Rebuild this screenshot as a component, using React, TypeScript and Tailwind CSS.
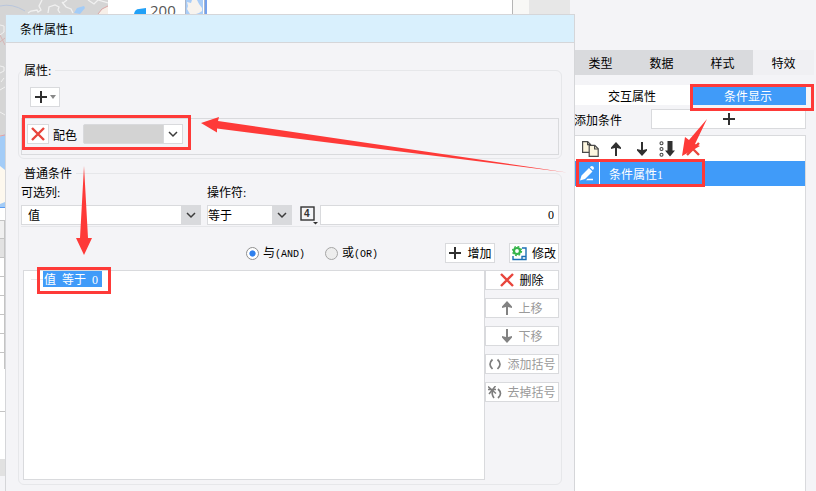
import React from "react";

const font = "font-['Liberation_Serif','Noto_Sans_CJK_SC',serif]";

function Chevron() {
  return (
    <svg width="10" height="10" viewBox="0 0 10 10" fill="none" stroke="#3c3c3c" strokeWidth="1.5">
      <path d="M1 3l4 4 4-4" />
    </svg>
  );
}

function Plus() {
  return (
    <svg width="14" height="14" viewBox="0 0 14 14" fill="none" stroke="#303030" strokeWidth="2">
      <path d="M7 1v12M1 7h12" />
    </svg>
  );
}

function Cross() {
  return (
    <svg width="14" height="14" viewBox="0 0 14 14" fill="none" stroke="#e8453c" strokeWidth="2.4">
      <path d="M1 1l12 12M13 1L1 13" />
    </svg>
  );
}

function Arrow({ down, color }: { down?: boolean; color: string }) {
  return (
    <svg width="12" height="14" viewBox="0 0 12 14" fill={color}>
      {down ? (
        <path d="M5 0h2v8l4-1v1.500L6 14 1 8.500V7l4 1z" />
      ) : (
        <path d="M5 14h2V6l4 1V5.500L6 0 1 5.500V7l4-1z" />
      )}
    </svg>
  );
}

function CopyIcon() {
  return (
    <svg width="17" height="16" viewBox="0 0 17 16" fill="#fdf6df" stroke="#4a4a4a" strokeWidth="1.2">
      <path d="M.6 .6h5l3 3v7.800h-8z" />
      <path d="M5.600 .6v3h3" fill="none" />
      <path d="M7.200 4.400h5.600l3.400 3.400v7.600h-9z" />
      <path d="M12.600 4.400v3.600h3.600" fill="none" />
    </svg>
  );
}

function SortIcon() {
  return (
    <svg width="16" height="16" viewBox="0 0 16 16" fill="none" stroke="#444" strokeWidth="1.1">
      <circle cx="2.500" cy="2.200" r="1.500" />
      <circle cx="2.500" cy="8" r="1.500" />
      <circle cx="2.500" cy="13.800" r="1.500" />
      <path d="M8.500 0h5v9.500H16L11 15.500 6 9.500h2.500z" fill="#303030" stroke="none" />
    </svg>
  );
}

function PencilIcon() {
  return (
    <svg width="15" height="15" viewBox="0 0 15 15" fill="#fff">
      <path d="M0 14.500L1.500 9.500 9 2l3.500 3.500L5 13zM9.800 1.300L11 .2q1.200-.5 2.200.4t.6 2.300l-1 1.200zM7.500 12.800H13v1.400H6z" />
    </svg>
  );
}

function ModifyIcon() {
  return (
    <svg width="15" height="15" viewBox="0 0 15 15" fill="none">
      <path d="M10 2h4v11.500H1V10M10 13.500V10.500h4" stroke="#1b6fb5" strokeWidth="1.400" />
      <circle cx="5" cy="5" r="3" stroke="#35b44a" strokeWidth="2.200" fill="#fff" />
      <circle cx="5" cy="5" r="4.500" stroke="#35b44a" strokeWidth="1.300" strokeDasharray="1.800 1.734" />
    </svg>
  );
}

function Brackets({ removed }: { removed?: boolean }) {
  return (
    <svg width="14" height="13" viewBox="0 0 14 13" fill="none" stroke="#7d7d7d" strokeWidth="1.700">
      <path d={removed ? "M5 4q-2 4 1 8M10 3q5 4.500 0 9" : "M4.500 1.500Q-.5 6 4.500 11M9.500 1.500q5 4.500 0 9.500"} />
      {removed && <path d="M0 .5l8 7M7.500 0L1 8M0 3.500h8" strokeWidth="1.500" />}
    </svg>
  );
}

function FieldIcon() {
  return (
    <svg width="18" height="19" viewBox="0 0 18 19" fill="none" stroke="#333">
      <rect x="1" y="1" width="13" height="13" strokeWidth="1.400" />
      <text x="4" y="11" fill="#333" stroke="none" className="font-['Liberation_Sans',sans-serif] text-[10px] font-bold">4</text>
      <path d="M13 16h5l-2.500 2.500z" fill="#333" stroke="none" />
    </svg>
  );
}

function Tool({ children, className = "", ...rest }: React.ButtonHTMLAttributes<HTMLButtonElement>) {
  return (
    <button
      type="button"
      className={`flex h-5 items-center border border-[#d9dadd] bg-white whitespace-nowrap ${className}`}
      {...rest}
    >
      {children}
    </button>
  );
}

function Text({ children }: { children: React.ReactNode }) {
  return <span className="pt-[2px]">{children}</span>;
}

function Dropdown({ id, value, className, pad }: { id: string; value: string; className: string; pad: string }) {
  return (
    <span className={`relative flex h-5 ${className}`}>
      <select id={id} className={`w-full appearance-none border border-[#d9dadd] bg-white pt-[2px] pr-5 ${pad}`}>
        <option>{value}</option>
      </select>
      <span className="pointer-events-none absolute inset-y-0 right-0 flex w-5 items-center justify-center bg-[#d9dadd]">
        <Chevron />
      </span>
    </span>
  );
}

function MapBackdrop() {
  return (
    <div className="flex h-full flex-col">
      <svg className="h-[207px] w-[108px] bg-[#d5d5d5]" viewBox="0 0 108 207" fill="none">
        <path d="M0 6Q12 3 25 11" stroke="#b9c6dc" />
        <path d="M28 13l3-2 6-1 1 2 3-2-2-4 3-6M48 13l1-6 6-2 4 2-1 3 2 3M62 2l4 5 5 2 2 4M67 0l-4 3M88 0l6 4 4-4 10 3" stroke="#f1f1f1" strokeWidth="1.300" />
        <path d="M74 13l3-5 7-2 1 2-5 6z" fill="#a3ccf7" />
        <path d="M98 14l4-5 6-3v8z" fill="#f7efe8" />
        <path d="M98 14l4-5 6-3" stroke="#d9a6a6" />
        <path d="M0 25l4 1v6l-4 3M0 66l4 1v4l-4 2M4 78l-3 4M0 90l5-3M0 112l5 3" stroke="#f1f1f1" />
        <path d="M0 35l5 10M0 42l5-4" stroke="#d6b4b4" />
        <path d="M0 137l5-3v73H0z" fill="#a3ccf7" />
        <path d="M0 136l5-1" stroke="#e6a0a0" />
        <path d="M0 166l5 4v32l-5 2z" fill="#fdf8ee" />
      </svg>
      <div className="h-[13px] w-[5px] border-t border-[#5b9bf0] bg-white" />
      <div className="h-[18px] w-[5px] border-t border-r border-[#c4c4c4] bg-[#f0f0f0]" />
      <div className="h-[19px] w-[5px] border-t border-r border-[#c4c4c4] bg-[#e2e2e2]" />
      <div className="h-[19px] w-[5px] border-t border-r border-[#c4c4c4] bg-white" />
      <div className="h-[19px] w-[5px] border-t border-r border-[#c4c4c4] bg-white" />
      <div className="h-[19px] w-[5px] border-t border-r border-[#c4c4c4] bg-white" />
      <div className="h-[19px] w-[5px] border-t border-r border-[#c4c4c4] bg-white" />
      <div className="h-[19px] w-[5px] border-t border-r border-[#c4c4c4] bg-white" />
      <div className="h-[17px] w-[5px] border-t border-r border-[#c4c4c4] bg-white" />
      <div className="h-[42px] w-[5px] bg-white" />
      <div className="h-[48px] w-[5px] border-t border-[#c4c4c4] bg-white" />
      <div className="h-[17px] w-[5px] bg-[#e1e1e1]" />
    </div>
  );
}

function ChartBackdrop() {
  return (
    <div className="flex flex-1 items-start border-r border-[#b5b5b5] bg-white">
      <svg className="mt-2 ml-[26px] h-[6px] w-[12px]" viewBox="0 0 12 6" fill="#22a1f7">
        <path d="M0 6Q1 1 5 1l7-1v6z" />
      </svg>
      <span className="ml-1 font-['Open_Sans',sans-serif] text-[15px] leading-5 text-[#555]">200</span>
      <svg className="ml-[9px] h-[14px] w-[22px]" viewBox="0 0 22 14">
        <path d="M0 0h18v14H0z" fill="#a9cdf8" />
        <path d="M2 2l4 1 1-3h5l2 4 3 4v3l-3 2-3 1H5L2 9l1-3z" fill="#f7f3ee" />
        <path d="M.5 0v14M19.500 0v14" stroke="#aab5c8" fill="none" />
        <path d="M21 0v14" stroke="#4682e8" strokeWidth="1.500" />
      </svg>
    </div>
  );
}

function ConditionDialog() {
  return (
    <section className="absolute top-[14px] right-[241px] bottom-0 left-[5px] border-t border-r border-l border-[#d5d6d9] bg-[#f4f4f7]">
      <h1 className="h-7 border-b border-[#d5d6d9] bg-[#d9f0fd] pl-[14px] leading-[30px]">条件属性1</h1>

      <div className="flex flex-col gap-[3px] px-3 pt-4">
        <fieldset className="rounded-md border border-[#e6e7ea] px-[2px] pb-[3px]">
          <legend className="pt-[2px] pr-1 pl-[3px] leading-5">属性:</legend>
          <div className="flex flex-col gap-[11px] pt-[6px]">
            <Tool className="ml-[9px] w-[30px] justify-center gap-[2px]" aria-label="属性">
              <Plus />
              <svg width="6" height="4" viewBox="0 0 6 4" fill="#888">
                <path d="M0 0h6L3 4z" />
              </svg>
            </Tool>
            <div className="flex h-[37px] items-start border border-[#d9dadd] pt-[5px] pl-[5px]">
              <Tool className="w-[22px] justify-center" aria-label="删除">
                <Cross />
              </Tool>
              <label htmlFor="palette" className="ml-1 pt-[2px] leading-5">配色</label>
              <span className="relative ml-[6px] flex h-5 w-[100px]">
                <select id="palette" className="w-full appearance-none rounded-[2px] border border-[#d9dadd] bg-[#d3d3d3]">
                  <option></option>
                </select>
                <span className="pointer-events-none absolute inset-y-0 right-0 flex w-5 items-center justify-center border border-[#d9dadd] bg-white">
                  <Chevron />
                </span>
              </span>
            </div>
          </div>
        </fieldset>

        <fieldset className="rounded-md border border-[#e6e7ea] px-[2px] pb-1">
          <legend className="pt-[2px] pr-1 pl-[3px] leading-5">普通条件</legend>
          <div className="flex border-b border-[#e6e7ea] pb-[1px]">
            <div className="w-[180px]">
              <label htmlFor="column" className="block h-[21px] leading-[18px]">可选列:</label>
              <Dropdown id="column" value="值" className="w-full" pad="pl-[6px]" />
            </div>
            <div className="ml-[6px] w-[85px]">
              <label htmlFor="operator" className="block h-[21px] leading-[18px]">操作符:</label>
              <Dropdown id="operator" value="等于" className="w-full" pad="pl-0" />
            </div>
            <div className="mt-[21px] ml-[7px] flex flex-1 gap-px">
              <button type="button" aria-label="值" className="flex h-5 w-5 items-center justify-center">
                <FieldIcon />
              </button>
              <input
                aria-label="值"
                defaultValue="0"
                className="h-5 min-w-0 flex-1 border border-[#d9dadd] bg-white px-1 text-right"
              />
            </div>
          </div>

          <div className="mt-4 flex h-5 items-center justify-end">
            <label className="flex items-center gap-1">
              <input
                type="radio"
                name="join"
                defaultChecked
                className="h-[13px] w-[13px] appearance-none rounded-full border border-[#8f8f8f] bg-white bg-radial from-[#2f80ed] from-35% to-white to-45%"
              />
              <Text>
                与<span className="font-['Liberation_Mono',monospace] text-[10px]">(AND)</span>
              </Text>
            </label>
            <label className="ml-5 flex items-center gap-1">
              <input
                type="radio"
                name="join"
                className="h-[13px] w-[13px] appearance-none rounded-full border border-[#a5a5a5] bg-[#ededed]"
              />
              <Text>
                或<span className="font-['Liberation_Mono',monospace] text-[10px]">(OR)</span>
              </Text>
            </label>
            <Tool className="ml-[67px] w-[50px] justify-center gap-[5px]">
              <Plus />
              <Text>增加</Text>
            </Tool>
            <Tool className="ml-[14px] w-[50px] justify-center gap-[5px]">
              <ModifyIcon />
              <Text>修改</Text>
            </Tool>
          </div>

          <div className="mt-[7px] flex">
            <ul className="ml-[2px] h-[210px] flex-1 border border-[#d9dadd] bg-white">
              <li className="flex items-center">
                <span className="ml-[7px] h-px w-[12px] bg-[#e6e7ea]" />
                <span className="flex h-4 items-center gap-[6px] bg-[#409bf9] pr-1 pl-px text-white">
                  <Text>值</Text>
                  <Text>等于</Text>
                  <Text>0</Text>
                </span>
              </li>
            </ul>
            <div className="flex w-[74px] flex-col gap-2">
              <Tool className="w-full justify-center gap-[5px]">
                <Cross />
                <Text>删除</Text>
              </Tool>
              <Tool disabled className="w-full justify-center gap-[5px] text-[#9a9a9a]">
                <Arrow color="#828282" />
                <Text>上移</Text>
              </Tool>
              <Tool disabled className="w-full justify-center gap-[5px] text-[#9a9a9a]">
                <Arrow down color="#828282" />
                <Text>下移</Text>
              </Tool>
              <Tool disabled className="w-full justify-center gap-[5px] text-[#9a9a9a]">
                <Brackets />
                <Text>添加括号</Text>
              </Tool>
              <Tool disabled className="w-full justify-center gap-[5px] text-[#9a9a9a]">
                <Brackets removed />
                <Text>去掉括号</Text>
              </Tool>
            </div>
          </div>
        </fieldset>
      </div>
    </section>
  );
}

function SidePanel() {
  return (
    <aside className="flex w-[246px] flex-col bg-[#f4f4f7] pt-[50px]">
      <nav className="flex h-[25px] pr-[2px]">
        <button type="button" className="flex-1 bg-[#d9dadd] pt-[2px]">类型</button>
        <button type="button" className="flex-1 bg-[#d9dadd] pt-[2px]">数据</button>
        <button type="button" className="flex-1 bg-[#d9dadd] pt-[2px]">样式</button>
        <button type="button" className="flex-1 bg-[#f0f0f3] pt-[2px]">特效</button>
      </nav>
      <div className="flex flex-1 flex-col pt-[10px] pr-[10px] pl-1">
        <div className="flex h-5">
          <button type="button" className="flex-1 bg-white pt-[3px]">交互属性</button>
          <button type="button" className="flex-1 bg-[#409bf9] pt-[3px] text-white">条件显示</button>
        </div>
        <div className="mt-1 flex items-center">
          <span className="w-[77px] pt-[3px]">添加条件</span>
          <Tool className="flex-1 justify-center" aria-label="添加条件">
            <Plus />
          </Tool>
        </div>
        <div className="mt-[6px] flex-1 border border-b-0 border-[#d9dadd] bg-white">
          <div className="flex h-[25px] items-center pl-[7px]">
            <button type="button" aria-label="copy" className="w-7"><CopyIcon /></button>
            <button type="button" aria-label="up" className="w-[26px]"><Arrow color="#303030" /></button>
            <button type="button" aria-label="down" className="w-[23px]"><Arrow down color="#303030" /></button>
            <button type="button" aria-label="sort" className="w-[27px]"><SortIcon /></button>
            <button type="button" aria-label="delete"><Cross /></button>
          </div>
          <div className="flex h-[25px] items-center bg-[#409bf9] text-white">
            <span className="flex h-full w-[25px] items-center justify-center border-r border-white">
              <PencilIcon />
            </span>
            <span className="ml-[9px] pt-[2px]">条件属性1</span>
          </div>
        </div>
      </div>
    </aside>
  );
}

function Annotations() {
  return (
    <svg className="pointer-events-none absolute top-0 left-0" width="816" height="491" viewBox="0 0 816 491">
      <g fill="none" stroke="#fe3a38" strokeWidth="3">
        <rect x="23.500" y="116.500" width="166" height="32" />
        <rect x="38.500" y="268.500" width="71" height="24" />
        <rect x="691.500" y="85.500" width="121" height="24" />
        <rect x="577.500" y="160.500" width="126" height="25" />
      </g>
      <g fill="#fe3a38">
        <path d="M201 123l18-6-1 4 349 51.500-350-44v4z" />
        <path d="M84 166l4 72h4l-8 17-8-17h4z" />
        <path d="M707 119l-12 25 5 2-18 10 3-19 4 3z" />
      </g>
    </svg>
  );
}

export default function App() {
  return (
    <main className={`relative h-screen overflow-hidden bg-[#f4f4f7] text-[12px] leading-4 text-black ${font}`}>
      <div className="flex h-full">
        <div className="w-[108px]">
          <MapBackdrop />
        </div>
        <ChartBackdrop />
        <div className="w-4 bg-[#f8f8f6]" />
        <div className="w-[41px] bg-[#e7e7e7]" />
        <SidePanel />
      </div>
      <ConditionDialog />
      <Annotations />
    </main>
  );
}
